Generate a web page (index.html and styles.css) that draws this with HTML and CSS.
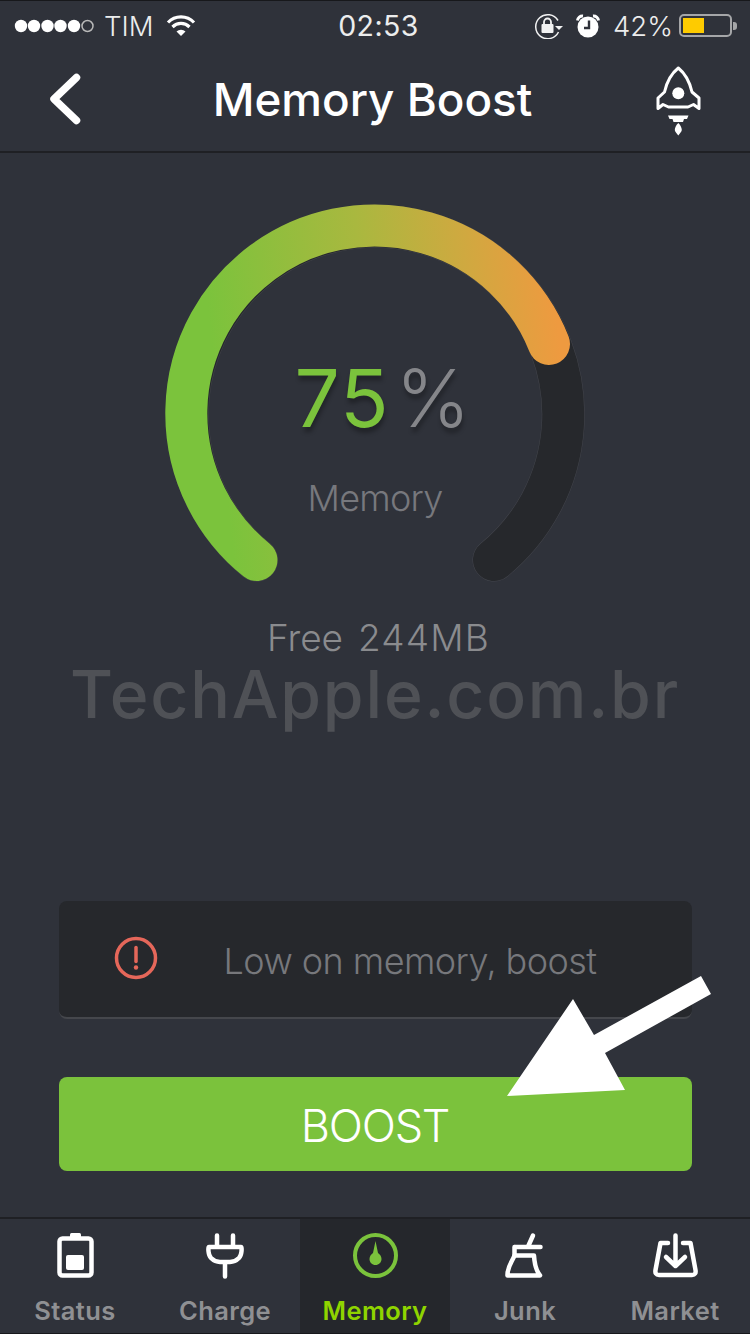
FILE: index.html
```html
<!DOCTYPE html>
<html lang="en">
<head>
<meta charset="utf-8">
<title>Memory Boost</title>
<link rel="stylesheet" href="styles.css">
</head>
<body>
<div class="phone">
  <header class="top">
    <div class="statusbar">
      <div class="sb-left">
        <svg class="signal" viewBox="14 18 80 16" width="80" height="16">
          <circle cx="21" cy="26" r="6.2"/><circle cx="34" cy="26" r="6.2"/><circle cx="47.500" cy="26" r="6.2"/><circle cx="60.500" cy="26" r="6.2"/><circle cx="74" cy="26" r="6.2"/>
          <circle class="hollow" cx="87.500" cy="26" r="5.500"/>
        </svg>
        <span class="carrier">TIM</span>
        <svg class="wifi" viewBox="167 14 30 22" width="30" height="22">
          <path d="M169 21.500a18 18 0 0 1 26 0" /><path d="M173.500 26a12 12 0 0 1 17 0"/>
          <path class="wifi-dot" d="M177.500 30.500a6.500 6.500 0 0 1 9 0L182 35z"/>
        </svg>
      </div>
      <div class="time">02:53</div>
      <div class="sb-right">
        <svg class="lockrot" viewBox="534 12 32 26" width="32" height="26">
          <path class="thin" d="M559 19.500a12 12 0 1 0 .5 11.500"/>
          <path class="solid" d="M556 25h8l-4 4z"/>
          <rect class="solid" x="542.500" y="23" width="12" height="9" rx="1"/>
          <path class="lockbar" d="M545 23.500v-2.500a3.500 3.500 0 0 1 7 0v2.500"/>
        </svg>
        <svg class="alarm" viewBox="576 13 26 24" width="26" height="24">
          <circle class="solid" cx="589" cy="26" r="10.500"/>
          <path class="alarm-hand" d="M590 19.500v7.500h-5"/>
          <path class="bell" d="M578.500 19.500a5 5 0 0 1 5.500-4.500M599.500 19.500a5 5 0 0 0-5.500-4.500"/>
        </svg>
        <span class="pct">42%</span>
        <div class="battery"><div class="battery-fill"></div></div>
        <div class="battery-nub"></div>
      </div>
    </div>
    <div class="navbar">
      <svg class="back" viewBox="48 70 36 54" width="36" height="54"><path d="M76.500 74.500L54 96l22.500 21.500"/></svg>
      <h1 class="title">Memory Boost</h1>
      <svg class="rocket" viewBox="652 63 52 74" width="52" height="74">
        <path class="rk" d="M678.300 68C672 73 667 81 664.500 92L658 98V108.500L663 104.500L668.500 107H688L693.500 104.500L699 108.500V98L692 92C689.500 81 684.500 73 678.300 68Z"/>
        <circle class="rk-fill" cx="678.300" cy="93.300" r="6"/>
        <polygon class="rk-fill" points="668,115.500 688.500,115.500 687,119 684,119 683,122 673.500,122 672.500,119 669.500,119"/>
        <path class="rk-fill" d="M678.300 123c2.500 2.500 3.500 5 3.500 7 0 1.500-2 3.500-3.500 5.500-1.500-2-3.500-4-3.500-5.500 0-2 1-4.500 3.500-7z"/>
      </svg>
    </div>
  </header>

  <main class="content">
    <div class="gauge">
      <svg class="gauge-svg" viewBox="160 200 430 390" width="430" height="390">
        <defs>
          <linearGradient id="arc" gradientUnits="userSpaceOnUse" x1="215" y1="380" x2="560" y2="345">
            <stop offset="0" stop-color="#7bc33c"/>
            <stop offset=".45" stop-color="#a9b83f"/>
            <stop offset=".75" stop-color="#cfa940"/>
            <stop offset="1" stop-color="#ee9a40"/>
          </linearGradient>
        </defs>
        <path class="arc-edge" d="M256.500 560A188 188 0 1 1 494 560"/>
        <path class="arc-track" d="M256.500 560A188 188 0 1 1 494 560"/>
        <path class="arc-value" stroke="url(#arc)" d="M256.500 560A188 188 0 1 1 549 344"/>
      </svg>
      <div class="gauge-center">
        <div class="reading"><span class="value">75</span><span class="unit">%</span></div>
        <div class="gauge-label">Memory</div>
      </div>
    </div>
    <div class="free"><span>Free</span><span class="free-amount">244MB</span></div>
    <div class="watermark">TechApple.com.br</div>
    <div class="alert">
      <svg class="alert-icon" viewBox="0 0 44 44" width="44" height="44">
        <circle cx="22" cy="22" r="19.500"/>
        <path d="M22 11.500v14"/>
        <circle class="dot" cx="22" cy="31.500" r="2.200"/>
      </svg>
      <span class="alert-text">Low on memory, boost</span>
    </div>
    <button class="boost">BOOST</button>
  </main>

  <nav class="tabs">
    <a class="tab">
      <svg viewBox="50 1231 50 50" width="50" height="50">
        <rect class="ic" x="59.500" y="1238.500" width="32" height="37" rx="3"/>
        <rect class="icf" x="70" y="1233" width="11" height="5" rx="1.500"/>
        <rect class="icf" x="66" y="1255" width="18" height="15" rx="2"/>
      </svg>
      <span>Status</span>
    </a>
    <a class="tab">
      <svg viewBox="200 1231 50 50" width="50" height="50">
        <path class="ic" d="M217 1235.500v11M233 1235.500v11M225 1264v12.500"/>
        <path class="ic" d="M209 1247h32c1 0 1 8-2 11-3 3-6 4-9 4h-10c-3 0-6-1-9-4-3-3-3-11-2-11z"/>
      </svg>
      <span>Charge</span>
    </a>
    <a class="tab tab-active">
      <svg viewBox="350 1231 50 50" width="50" height="50">
        <circle class="ic ic-green" cx="375.500" cy="1255.500" r="20.500"/>
        <path class="icf icf-green" d="M375.500 1241l2.500 12c2 1.400 3.500 3.400 3.500 6 0 3.400-2.700 6-6 6s-6-2.600-6-6c0-2.600 1.500-4.600 3.500-6z"/>
      </svg>
      <span>Memory</span>
    </a>
    <a class="tab">
      <svg viewBox="500 1231 50 50" width="50" height="50">
        <path class="ic" d="M533 1235.500l-4.500 10M515 1247H540.500M514.500 1247V1255.500"/>
        <path class="ic" d="M514.500 1255.500H534C534.500 1265 536.500 1271 540 1275.500H507.500C507 1267 512 1262 514.500 1255.500Z"/>
      </svg>
      <span>Junk</span>
    </a>
    <a class="tab">
      <svg viewBox="650 1231 50 50" width="50" height="50">
        <path class="ic" d="M668 1243h-7.500l-5 27c-.5 3 .5 5 3.500 5h33c3 0 4-2 3.500-5l-5-27H683"/>
        <path class="ic" d="M675.500 1235.500v29M666 1257l9.500 9 9.500-9"/>
      </svg>
      <span>Market</span>
    </a>
  </nav>

  <svg class="arrow" viewBox="0 0 750 1334" width="750" height="1334">
    <polygon points="507,1096 573,999 594,1035 701,976 711,994 605,1053 625,1090"/>
  </svg>
</div>
</body>
</html>
```
FILE: styles.css
```css
* { box-sizing: border-box; }
html, body { margin: 0; padding: 0; }
body { background: #2f323a; }

.phone {
  position: relative;
  width: 750px;
  height: 1334px;
  display: flex;
  flex-direction: column;
  background: #2f323a;
  border-top: 1px solid #17181b;
  border-bottom: 1px solid #17181b;
  overflow: hidden;
  font-family: Inter, "Liberation Sans", sans-serif;
}

.top { height: 152px; border-bottom: 2px solid #1f2024; flex: none; }

.statusbar {
  height: 49px;
  display: grid;
  grid-template-columns: 1fr auto 1fr;
  align-items: center;
  color: #eceded;
  font-size: 27.500px;
  font-weight: 300;
}
.sb-left { display: flex; align-items: center; padding-left: 14px; }
.signal { fill: #fff; }
.signal .hollow { fill: none; stroke: #b8b8b8; stroke-width: 1.500; }
.carrier { margin-left: 10px; width: 62px; }
.wifi { fill: none; stroke: #fff; stroke-width: 3.200; }
.wifi .wifi-dot { fill: #fff; stroke: none; }
.time { font-size: 28.500px; font-weight: 400; letter-spacing: .4px; padding-left: 7px; }
.sb-right { display: flex; align-items: center; justify-content: flex-end; padding-right: 13px; }
.lockrot { margin-right: 10px; }
.lockrot .thin { fill: none; stroke: #f2f2f2; stroke-width: 1.500; }
.lockrot .solid { fill: #f2f2f2; }
.lockrot .lockbar { fill: none; stroke: #f2f2f2; stroke-width: 1.800; }
.alarm { margin-right: 12px; }
.alarm .solid { fill: #fff; }
.alarm .alarm-hand { fill: none; stroke: #2f323a; stroke-width: 2.400; }
.alarm .bell { fill: none; stroke: #fff; stroke-width: 3; }
.pct { margin-right: 6px; }
.battery {
  width: 53px;
  height: 23px;
  border: 2px solid #a5a6a8;
  border-radius: 5px;
  padding: 2px;
}
.battery-fill { width: 21px; height: 15px; background: #fecb00; }
.battery-nub { width: 4px; height: 8px; background: #a5a6a8; border-radius: 0 3px 3px 0; margin-left: 1px; }

.navbar {
  height: 100px;
  display: flex;
  align-items: center;
  justify-content: space-between;
  padding: 0 46px 1px 48px;
}
.back { fill: none; stroke: #fff; stroke-width: 7.500; stroke-linecap: round; stroke-linejoin: round; }
.title {
  margin: 0 0 0 9px;
  color: #fff;
  font-size: 45.800px;
  font-weight: 500;
}
.rocket .rk { fill: none; stroke: #fff; stroke-width: 3; stroke-linejoin: round; }
.rocket .rk-fill { fill: #fff; }

.content {
  flex: 1;
  display: flex;
  flex-direction: column;
  align-items: center;
  padding-top: 47px;
  min-height: 0;
}
.gauge { position: relative; width: 430px; height: 390px; flex: none; }
.gauge-svg { display: block; }
.arc-edge, .arc-track, .arc-value { fill: none; stroke-linecap: round; }
.arc-edge { stroke: #43454c; stroke-width: 43; }
.arc-track { stroke: #26282c; stroke-width: 42; }
.arc-value { stroke-width: 42; }

.gauge-center {
  position: absolute;
  left: 0;
  right: 0;
  top: 148px;
  display: flex;
  flex-direction: column;
  align-items: center;
}
.reading { display: flex; align-items: baseline; height: 100px; line-height: 100px; padding-left: 15px; text-shadow: 1px 5px 4px rgba(0,0,0,.3); }
.value { color: #7bc33c; font-size: 80px; font-weight: 400; letter-spacing: 1px; }
.unit { color: #85868a; font-size: 80px; font-weight: 300; margin-left: 6px; }
.gauge-label { color: #77787d; font-size: 36px; font-weight: 300; margin-top: 28px; letter-spacing: -.8px; }

.free {
  display: flex;
  gap: 15px;
  margin-top: 27px;
  padding-left: 7px;
  color: #8a8b8e;
  font-size: 37px;
  font-weight: 300;
  line-height: 42px;
}
.free-amount { letter-spacing: 1.200px; }
.watermark {
  color: #4f5156;
  font-size: 66px;
  font-weight: 500;
  line-height: 64px;
  margin-top: 3px;
  letter-spacing: 1.800px;
  white-space: nowrap;
}
.alert {
  margin-top: 175px;
  width: 633px;
  height: 118px;
  flex: none;
  display: flex;
  align-items: center;
  padding-left: 55px;
  background: #26282c;
  border-radius: 8px;
  border-bottom: 2px solid #45474c;
}
.alert-icon { fill: none; stroke: #e5675a; stroke-width: 3.500; stroke-linecap: round; flex: none; margin-top: -2px; }
.alert-icon .dot { fill: #e5675a; stroke: none; }
.alert-text { margin-left: 66px; padding-top: 3px; color: #77787c; font-size: 36px; font-weight: 300; letter-spacing: -.55px; }
.boost {
  margin-top: 58px;
  width: 633px;
  height: 94px;
  flex: none;
  border: 0;
  padding: 3px 0 0;
  border-radius: 8px;
  background: #7bc23c;
  color: #fff;
  font-family: inherit;
  font-size: 45px;
  font-weight: 300;
  letter-spacing: -1.200px;
}

.tabs {
  height: 116px;
  flex: none;
  display: grid;
  grid-template-columns: repeat(5, 150px);
  border-top: 2px solid #1f2024;
}
.tab {
  display: flex;
  flex-direction: column;
  align-items: center;
  padding-top: 12px;
  color: #8f9093;
  font-size: 25.500px;
  font-weight: 600;
  line-height: 30px;
  letter-spacing: .4px;
}
.tab svg { display: block; margin-bottom: 15px; }
.tab-active { background: #25272c; color: #8fd400; }
.ic { fill: none; stroke: #fff; stroke-width: 4.500; stroke-linecap: round; stroke-linejoin: round; }
.icf { fill: #fff; }
.ic-green { stroke: #7bc33c; stroke-width: 4; }
.icf-green { fill: #7bc33c; }

.arrow { position: absolute; left: 0; top: -1px; fill: #fff; pointer-events: none; }
```
